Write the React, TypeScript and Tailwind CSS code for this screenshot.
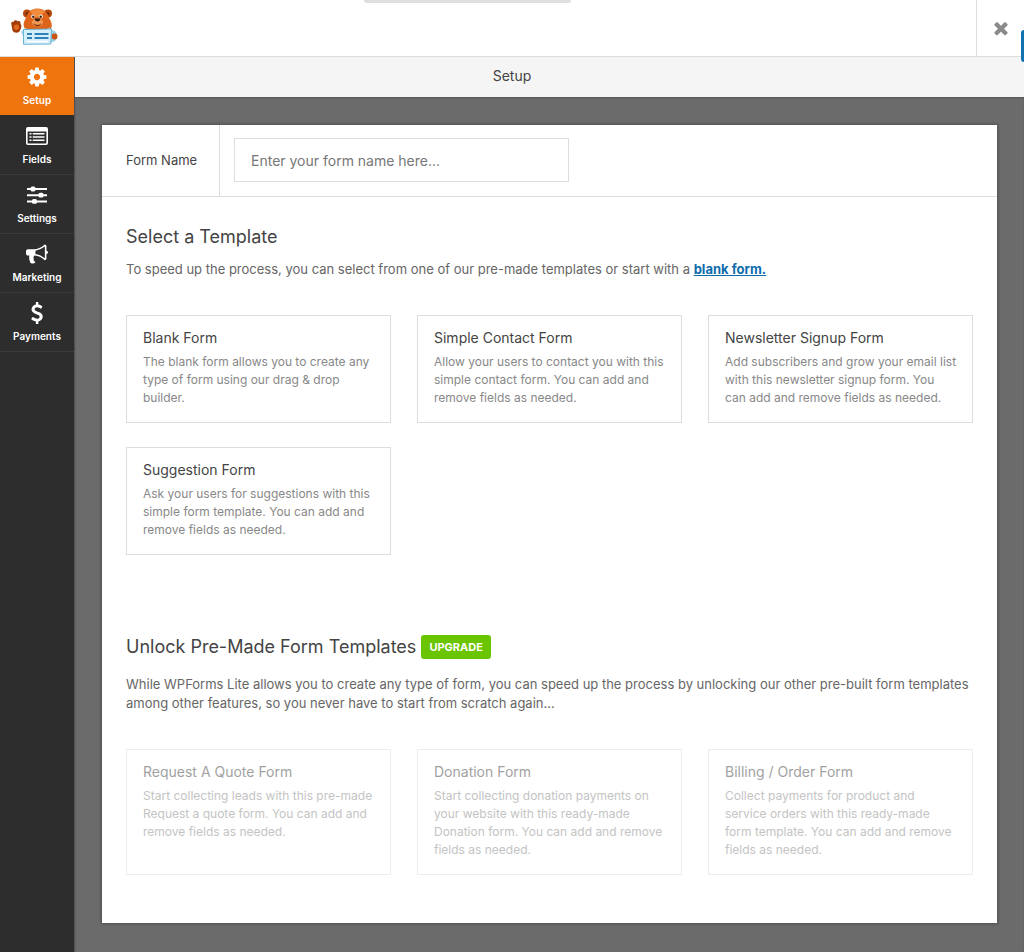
import type { ReactNode } from "react";

const glyphs = {
  cog: "M1152 896q0-106-75-181t-181-75-181 75-75 181 75 181 181 75 181-75 75-181zm512-109v222q0 12-8 23t-20 13l-185 28q-19 54-39 91 35 50 107 138 10 12 10 25t-9 23q-27 37-99 108t-94 71q-12 0-26-9l-138-108q-44 23-91 38-16 136-29 186-7 28-36 28h-222q-14 0-24.5-8.5t-11.5-21.5l-28-184q-49-16-90-37l-141 107q-10 9-25 9-14 0-25-11-126-114-165-168-7-10-7-23 0-12 8-23 15-21 51-66.5t54-70.5q-27-50-41-99l-183-27q-13-2-21-12.5t-8-23.5v-222q0-12 8-23t19-13l186-28q14-46 39-92-40-57-107-138-10-12-10-24 0-10 9-23 26-36 98.5-107.5t94.5-71.5q13 0 26 10l138 107q44-23 91-38 16-136 29-186 7-28 36-28h222q14 0 24.5 8.5t11.5 21.5l28 184q49 16 90 37l142-107q9-9 24-9 13 0 25 10 129 119 165 170 7 8 7 22 0 12-8 23-15 21-51 66.5t-54 70.5q26 50 41 98l183 28q13 2 21 12.5t8 23.5z",
  bullhorn:
    "M1664 640q53 0 90.5 37.5t37.5 90.5-37.5 90.5-90.5 37.5v384q0 52-38 90t-90 38q-417-347-812-380-58 19-91 66t-31 100.5 40 92.5q-20 33-23 65.5t6 58 33.5 55 48 50 61.5 50.5q-29 58-111.5 83t-168.5 11.5-132-55.5q-7-23-29.5-87.5t-32-94.5-23-89-15-101 3.5-98.5 22-110.5h-122q-66 0-113-47t-47-113v-192q0-66 47-113t113-47h480q435 0 896-384 52 0 90 38t38 90v384zm-128 604v-954q-394 302-768 343v270q377 42 768 341z",
  dollar:
    "M1362 1185q0 153-99.5 263.5t-258.5 136.5v175q0 14-9 23t-23 9h-135q-13 0-22.5-9.5t-9.5-22.5v-175q-66-9-127.5-31t-101.5-44.5-74-48-46.5-37.5-17.5-18q-17-21-2-41l103-135q7-10 23-12 15-2 24 9l2 2q113 99 243 125 37 8 74 8 81 0 142.5-43t61.5-122q0-28-15-53t-33.5-42-58.5-37.5-66-32-80-32.5q-39-16-61.5-25t-61.5-26.5-62.5-31-56.5-35.5-53.5-42.5-43.5-49-35.5-58-21-66.5-8.5-78q0-138 98-242t255-134v-180q0-13 9.5-22.5t22.5-9.5h135q14 0 23 9t9 23v176q57 6 110.5 23t87 33.5 63.5 37.5 39 29 15 14q17 18 5 38l-81 146q-8 15-23 16-14 3-27-7-3-3-14.5-12t-39-26.5-58.5-32-74.5-26-85.5-11.5q-95 0-155 43t-60 111q0 26 8.5 48t29.5 41.5 39.5 33 56 31 60.5 27 70 27.5q53 20 81 31.5t76 35 75.5 42.5 62 50 53 63.5 31.5 76.5 13 94z",
  times:
    "M1490 1322q0 40-28 68l-136 136q-28 28-68 28t-68-28l-294-294-294 294q-28 28-68 28t-68-28l-136-136q-28-28-28-68t28-68l294-294-294-294q-28-28-28-68t28-68l136-136q28-28 68-28t68 28l294 294 294-294q28-28 68-28t68 28l136 136q28 28 28 68t-28 68l-294 294 294 294q28 28 28 68z",
};

function Glyph({ d, className }: { d: string; className: string }) {
  return (
    <svg viewBox="0 0 1792 1792" fill="currentColor" className={className} aria-hidden="true">
      <path d={d} />
    </svg>
  );
}

function ListIcon() {
  return (
    <svg viewBox="0 0 24 20" className="h-5 w-6" aria-hidden="true">
      <path
        fill="currentColor"
        fillRule="evenodd"
        d="M3 1h18a2 2 0 0 1 2 2v14a2 2 0 0 1-2 2H3a2 2 0 0 1-2-2V3a2 2 0 0 1 2-2zM2.600 5.500v11.300c0 .4.3.7.7.7h17.400c.4 0 .7-.3.7-.7V5.500z"
      />
      <path fill="currentColor" d="M4.500 7h2v1.600h-2zM7.700 7h11.800v1.600H7.700zM4.500 10.200h2v1.600h-2zM7.700 10.200h11.800v1.600H7.700zM4.500 13.400h2V15h-2zM7.700 13.400h11.800V15H7.700z" />
    </svg>
  );
}

function SlidersIcon() {
  return (
    <svg viewBox="0 0 22 20" className="h-5 w-[22px]" fill="currentColor" aria-hidden="true">
      <path d="M1 3h20v2H1zM1 9.200h20v2H1zM1 15.400h20v2H1z" />
      <rect x="4.500" y="1.600" width="5" height="4.800" rx="1.600" />
      <rect x="12.500" y="7.800" width="5" height="4.800" rx="1.600" />
      <rect x="6" y="14" width="5" height="4.800" rx="1.600" />
    </svg>
  );
}

function BearLogo() {
  return (
    <svg viewBox="0 0 50 40" className="h-10 w-[50px]" role="img" aria-label="WPForms">
      <path d="M11 25c1-3 5-4 8-3l4 6-9 3z" fill="#a8d8ea" />
      <path d="M38 24c5-2 9 0 9 5s-4 7-8 6z" fill="#9bd0e6" />
      <circle cx="44.500" cy="29.500" r="3" fill="#c9530f" />
      <path d="M1.500 18c-1-3 1-4 2-3 .5-2 3-2.500 4-.5 1.500-1 3.500 0 3 2.500 1.500 1 1 4-.5 6.500-1 3-6 3-7.500 0z" fill="#a43c08" />
      <path d="M4 19c1-2 4-2 5 0s-1 4-2.500 4S3 21 4 19z" fill="#df6a1d" />
      <circle cx="17" cy="6.500" r="4" fill="#b7460b" />
      <circle cx="38" cy="6.500" r="4" fill="#b7460b" />
      <circle cx="17.500" cy="7" r="2" fill="#6f2a0b" />
      <circle cx="37.500" cy="7" r="2" fill="#6f2a0b" />
      <path d="M27.500 1.500C35 1.500 38.500 7 39.500 12c3 4 3 9 0 11.500-4 2-19 3-24-1-2.500-3-2.500-7 0-10.500 1-5 4.500-10.500 12-10.500z" fill="#de641b" />
      <path d="M20 5c4-4 11-4 15 0-3 2-4 3-4.500 5h-6C24 8 23 6 20 5z" fill="#f08c3c" />
      <ellipse cx="27.500" cy="15.500" rx="5.500" ry="4" fill="#f09a55" />
      <ellipse cx="23" cy="9.500" rx="1.800" ry="2" fill="#fff" />
      <ellipse cx="31" cy="9.500" rx="1.800" ry="2" fill="#fff" />
      <circle cx="23.300" cy="9.800" r="1.200" fill="#3a1a0c" />
      <circle cx="30.700" cy="9.800" r="1.200" fill="#3a1a0c" />
      <path d="M24.800 11.500h5.400c.6 1.500-1 3-2.700 3s-3.300-1.500-2.700-3z" fill="#3a1a0c" />
      <path d="M23.500 16c2 2.500 6 2.500 8 0-.5 4-7 4.500-8 0z" fill="#7a260c" />
      <path d="M15 21c6 4 19 4 25-.5l-1 6H16z" fill="#b9dfed" />
      <path d="M13.500 22.500l28-.5-.8 15-27.200.300z" fill="#d4effa" stroke="#68b5d6" />
      <path d="M17 27h5M17 31h5M24.500 27h14M24.500 31h14" stroke="#2f82b7" strokeWidth="1.800" />
      <path d="M17 34.500h21" stroke="#fff" strokeWidth="1.500" />
    </svg>
  );
}

const navItems: { label: string; icon: ReactNode }[] = [
  { label: "Setup", icon: <Glyph d={glyphs.cog} className="size-[22px]" /> },
  { label: "Fields", icon: <ListIcon /> },
  { label: "Settings", icon: <SlidersIcon /> },
  { label: "Marketing", icon: <Glyph d={glyphs.bullhorn} className="size-[22px]" /> },
  { label: "Payments", icon: <Glyph d={glyphs.dollar} className="size-[22px]" /> },
];

interface Template {
  title: string;
  text: string;
}

const templates: Template[] = [
  { title: "Blank Form", text: "The blank form allows you to create any type of form using our drag & drop builder." },
  { title: "Simple Contact Form", text: "Allow your users to contact you with this simple contact form. You can add and remove fields as needed." },
  { title: "Newsletter Signup Form", text: "Add subscribers and grow your email list with this newsletter signup form. You can add and remove fields as needed." },
  { title: "Suggestion Form", text: "Ask your users for suggestions with this simple form template. You can add and remove fields as needed." },
];

const lockedTemplates: Template[] = [
  { title: "Request A Quote Form", text: "Start collecting leads with this pre-made Request a quote form. You can add and remove fields as needed." },
  { title: "Donation Form", text: "Start collecting donation payments on your website with this ready-made Donation form. You can add and remove fields as needed." },
  { title: "Billing / Order Form", text: "Collect payments for product and service orders with this ready-made form template. You can add and remove fields as needed." },
];

function TemplateGrid({ items, locked = false }: { items: Template[]; locked?: boolean }) {
  return (
    <div className={locked ? "grid grid-cols-3 gap-x-[26px] gap-y-6 opacity-50" : "grid grid-cols-3 gap-x-[26px] gap-y-6"}>
      {items.map((item) => (
        <button
          key={item.title}
          type="button"
          disabled={locked}
          className="flex flex-col justify-start border border-[#dddddd] pt-[11px] pr-[14px] pb-[15px] pl-4 text-left"
        >
          <span className="text-sm leading-[22px] text-[#444444]">{item.title}</span>
          <span className="mt-1 text-xs leading-[18px] text-[#888888]">{item.text}</span>
        </button>
      ))}
    </div>
  );
}

export default function App() {
  return (
    <div className="flex min-h-screen flex-col bg-[#6b6b6b] font-['Inter',sans-serif] text-[#444444]">
      <header className="relative flex h-[57px] items-stretch justify-between border-b border-[#dddddd] bg-white">
        <div className="pt-[7px] pl-[10px]">
          <BearLogo />
        </div>
        <div className="absolute top-0 left-[364px] h-[3px] w-[207px] rounded-b bg-[#dfdfdf]" />
        <button type="button" aria-label="Close" className="flex w-12 items-center justify-center border-l border-[#dddddd] text-[#8b8b8b]">
          <Glyph d={glyphs.times} className="size-5" />
        </button>
        <div className="absolute top-[30px] right-0 h-8 w-[3px] rounded-l bg-[#1272b0]" />
      </header>

      <div className="flex grow items-stretch">
        <nav className="w-[75px] shrink-0 border-r border-[#505050] bg-[#2d2d2d]">
          {navItems.map((item, i) => (
            <button
              key={item.label}
              type="button"
              className={
                i === 0
                  ? "flex h-[59px] w-full flex-col items-center border-b border-[#2d2d2d] bg-[#f0740e] pt-2 text-white"
                  : "flex h-[59px] w-full flex-col items-center border-b border-[#3b3b3b] pt-2 text-white"
              }
            >
              <span className="flex h-6 items-center">{item.icon}</span>
              <span className="mt-[3px] text-[10px] leading-4 font-semibold">{item.label}</span>
            </button>
          ))}
        </nav>

        <main className="flex min-w-0 grow flex-col">
          <h1 className="h-10 bg-[#f5f5f5] pr-[75px] text-center text-sm leading-[38px]">Setup</h1>
          <div className="grow px-[27px] pt-7 pb-7 shadow-[inset_0_1px_2px_rgba(0,0,0,0.2)]">
            <div className="bg-white shadow-[0_0_3px_1px_rgba(0,0,0,0.25)]">
              <div className="flex items-stretch border-b border-[#dddddd]">
                <label htmlFor="form-name" className="flex w-[118px] shrink-0 items-center border-r border-[#dddddd] pl-6 text-[13px]">
                  Form Name
                </label>
                <input
                  id="form-name"
                  type="text"
                  placeholder="Enter your form name here..."
                  className="mt-[13px] mb-[14px] ml-[14px] h-11 w-[335px] border border-[#dddddd] px-4 text-sm outline-none placeholder:text-[#777777]"
                />
              </div>

              <div className="px-6 pt-7 pb-12">
                <h2 className="text-lg leading-6">Select a Template</h2>
                <p className="mt-[11px] text-[13px] leading-[19px] text-[#666666]">
                  To speed up the process, you can select from one of our pre-made templates or start with a{" "}
                  <a href="#blank" className="font-bold text-[#0e6cad] underline">
                    blank form.
                  </a>
                </p>
                <div className="mt-9">
                  <TemplateGrid items={templates} />
                </div>

                <div className="mt-20 flex items-center gap-[5px]">
                  <h2 className="text-lg leading-6">Unlock Pre-Made Form Templates</h2>
                  <a href="#upgrade" className="rounded-[3px] bg-[#6ac400] px-2 text-[11px] leading-6 font-bold text-white">
                    UPGRADE
                  </a>
                </div>
                <p className="mt-4 text-[13px] leading-[19px] text-[#666666]">
                  While WPForms Lite allows you to create any type of form, you can speed up the process by unlocking our other pre-built form
                  templates among other features, so you never have to start from scratch again...
                </p>
                <div className="mt-9">
                  <TemplateGrid items={lockedTemplates} locked />
                </div>
              </div>
            </div>
          </div>
        </main>
      </div>
    </div>
  );
}
